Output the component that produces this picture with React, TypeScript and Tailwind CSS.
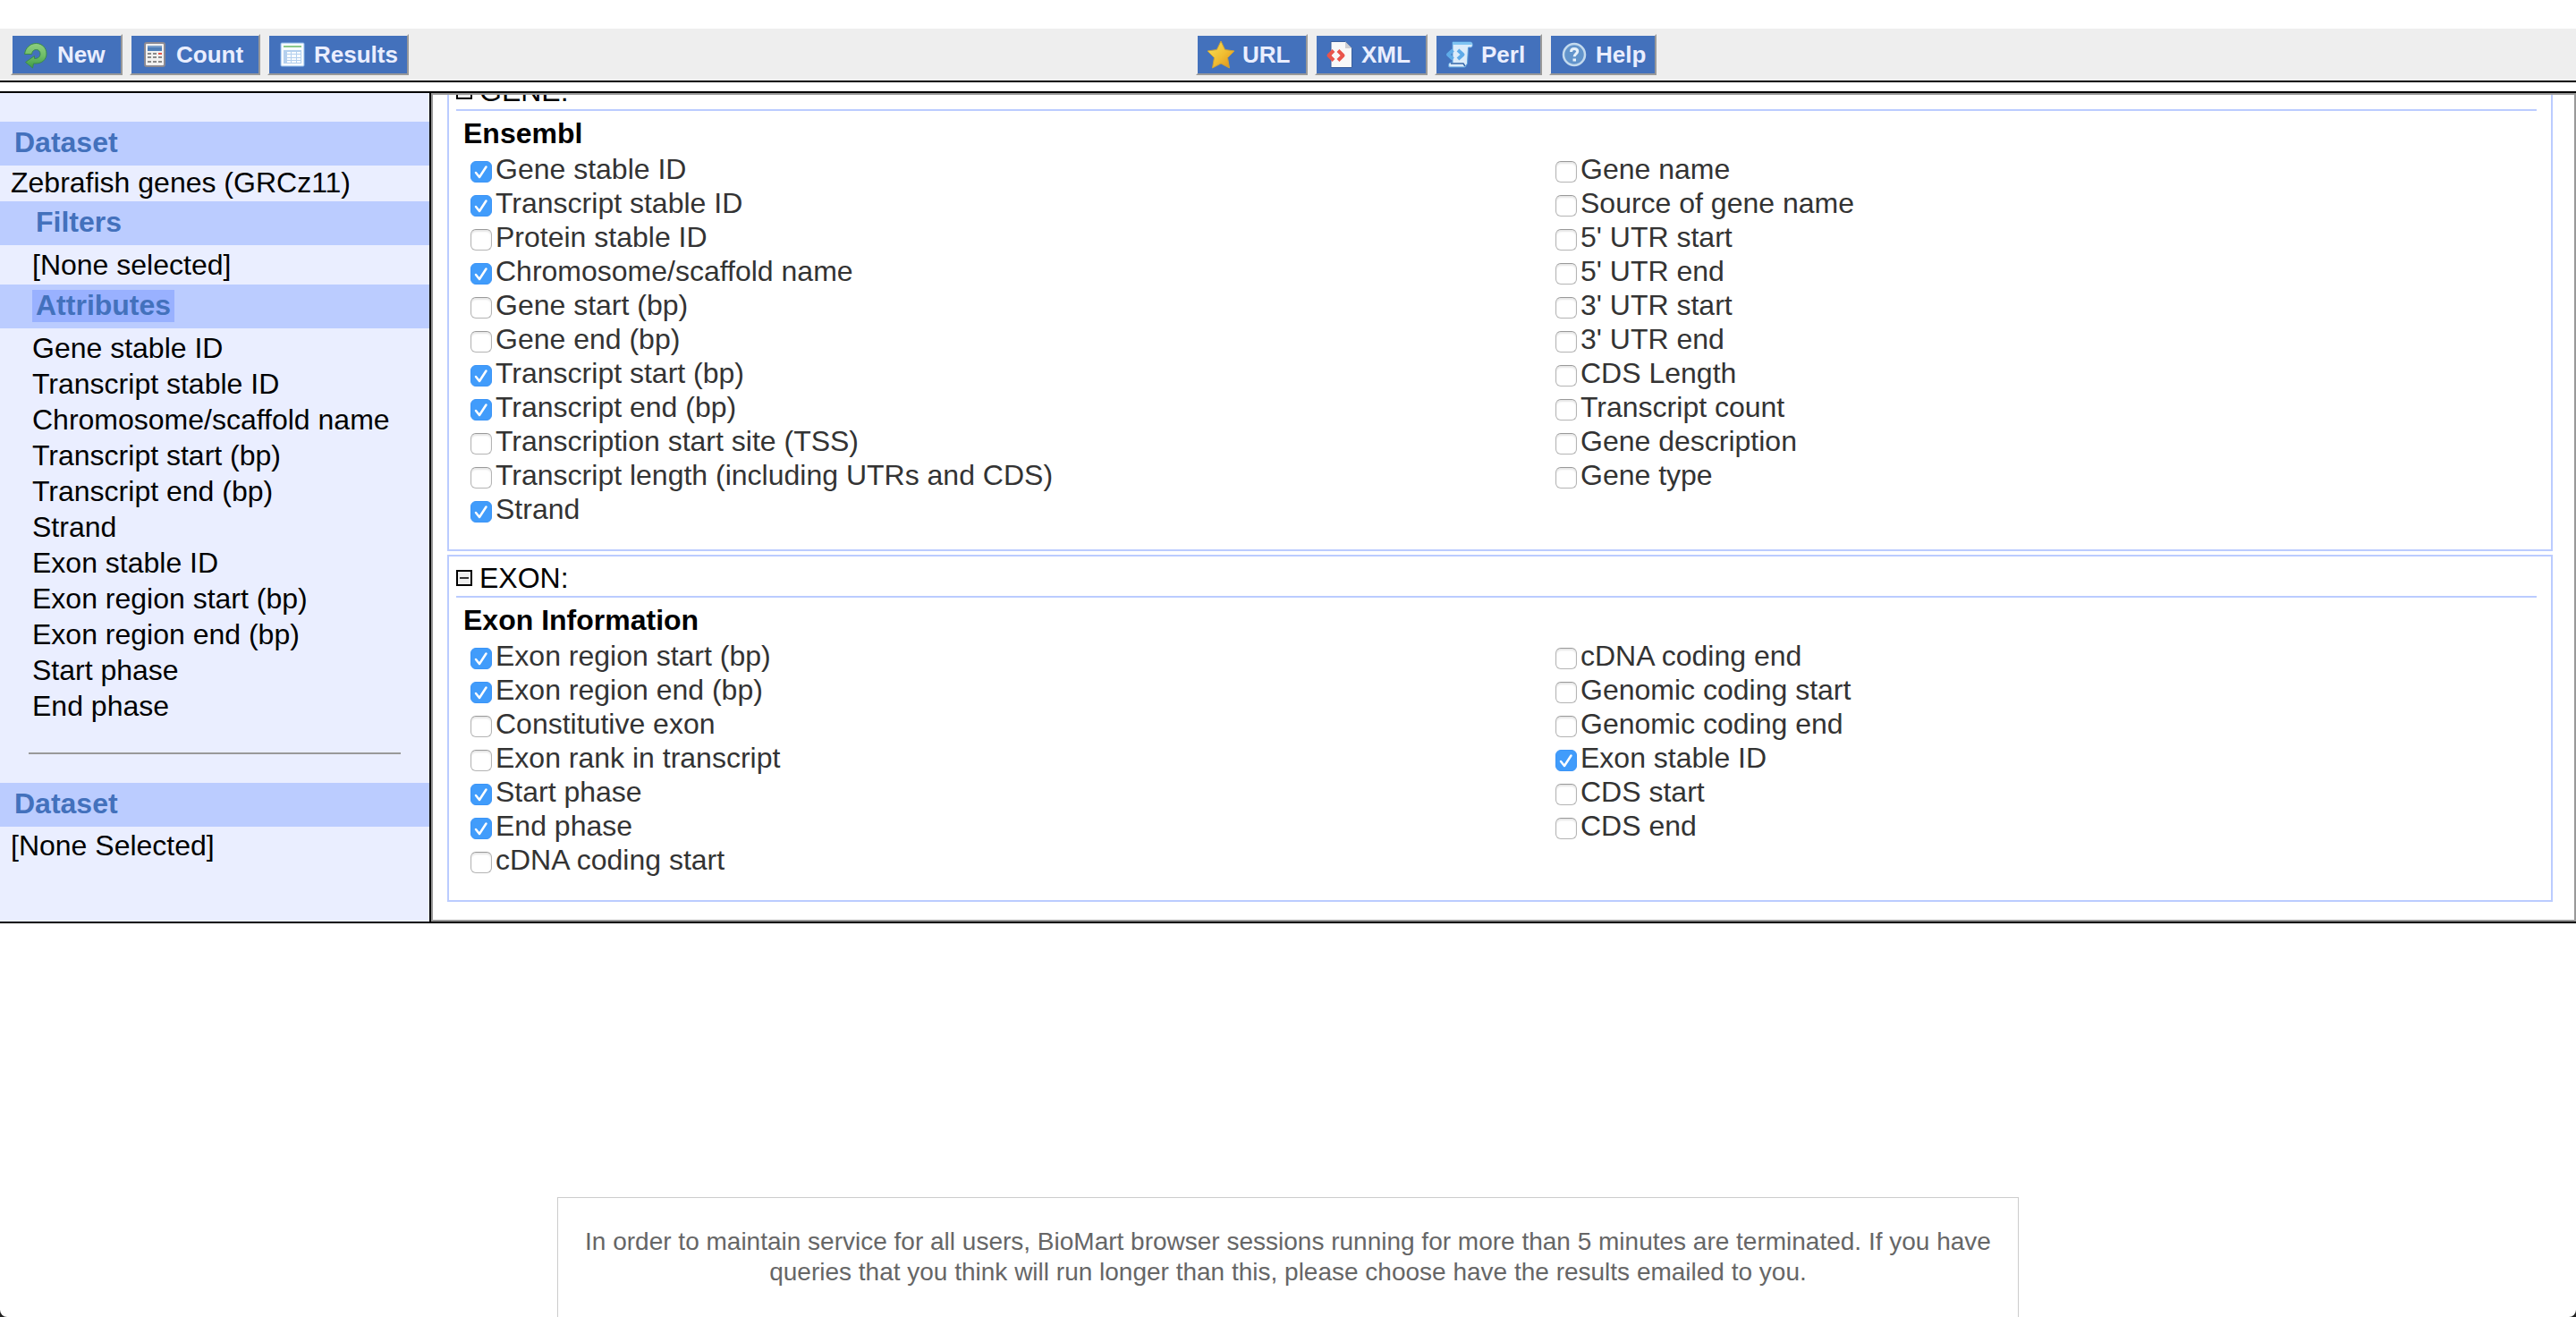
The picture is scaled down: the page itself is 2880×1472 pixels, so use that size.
import React from "react";

type Attribute = { label: string; checked?: boolean };

const NewIcon = () => (
  <svg viewBox="0 0 32 32" className="size-8 shrink-0" aria-hidden="true">
    <defs>
      <linearGradient id="newGreen" x1="0" y1="0" x2="0" y2="1">
        <stop offset="0" stopColor="#8fce80" />
        <stop offset="0.5" stopColor="#6fbd68" />
        <stop offset="1" stopColor="#3f9a45" />
      </linearGradient>
    </defs>
    <path
      d="M3.500 15.500C4.500 8 10 3.500 16.500 3.500C23 3.500 28 8.500 28 15C28 21.500 23 26 16 26L13.500 26L12.500 31L4.500 24.500L14.500 17.500L14.500 20.500C18.500 20.500 21 18.500 21 15.200C21 12.500 19 10.500 16.500 10.500C14 10.500 12 12 11.500 15.500Z"
      fill="url(#newGreen)"
      stroke="#3a8a4c"
      strokeWidth="1"
      strokeLinejoin="round"
    />
  </svg>
);

const CountIcon = () => (
  <svg viewBox="0 0 32 32" className="size-8 shrink-0" aria-hidden="true">
    <rect x="5" y="3" width="22" height="26" rx="2" fill="#f2f1f0" stroke="#8c8a92" strokeWidth="2" />
    <rect x="8" y="6" width="16" height="6" fill="#4f7fb8" />
    <rect x="8" y="6" width="16" height="2" fill="#7ba0cb" />
    <g fill="#8a8a8a">
      <rect x="8" y="14" width="4" height="2" />
      <rect x="14" y="14" width="4" height="2" />
      <rect x="8" y="18" width="4" height="2" />
      <rect x="14" y="18" width="4" height="2" />
      <rect x="20" y="18" width="4" height="2" />
      <rect x="8" y="23" width="4" height="2" />
      <rect x="14" y="23" width="4" height="2" />
      <rect x="20" y="23" width="4" height="2" />
    </g>
    <rect x="20" y="14" width="4" height="2" fill="#e4574c" />
  </svg>
);

const ResultsIcon = () => (
  <svg viewBox="0 0 32 32" className="size-8 shrink-0" aria-hidden="true">
    <rect x="3" y="3" width="26" height="26" rx="1" fill="#f7fbfe" stroke="#8db8e8" strokeWidth="1" />
    <rect x="6" y="6" width="20" height="2" fill="#8cc98a" />
    <g fill="#b4d0ee">
      <rect x="6" y="11" width="4" height="15" />
      <rect x="10" y="11" width="16" height="2" />
      <rect x="10" y="15" width="16" height="1" />
      <rect x="10" y="19" width="16" height="1" />
      <rect x="10" y="22" width="16" height="1" />
      <rect x="10" y="25" width="16" height="1" />
      <rect x="14" y="11" width="1" height="15" />
      <rect x="20" y="11" width="1" height="15" />
      <rect x="25" y="11" width="1" height="15" />
    </g>
  </svg>
);

const StarIcon = () => (
  <svg viewBox="0 0 32 32" className="size-8 shrink-0" aria-hidden="true">
    <defs>
      <linearGradient id="gold" x1="0" y1="0" x2="1" y2="1">
        <stop offset="0" stopColor="#f9e45a" />
        <stop offset="0.550" stopColor="#f0bd31" />
        <stop offset="1" stopColor="#dc8a1c" />
      </linearGradient>
    </defs>
    <path
      d="M16 1L20.600 10.500L31 12L23.500 19.500L25.500 31L16 26L6.500 31L8.500 19.500L1 12L11.400 10.500Z"
      fill="url(#gold)"
      stroke="#c9a13a"
      strokeWidth="1"
      strokeLinejoin="round"
    />
  </svg>
);

const XmlIcon = () => (
  <svg viewBox="0 0 32 32" className="size-8 shrink-0" aria-hidden="true">
    <path d="M6 1.500H22L29.500 9V30.500H6Z" fill="#f8f8f8" stroke="#3a5f9c" strokeWidth="1" />
    <path d="M22 1.500V9H29.500Z" fill="#cfcfd2" />
    <g fill="none" stroke="#e9544b" strokeWidth="4" strokeLinejoin="round">
      <path d="M9 11.500L3.500 17L9 22.500" />
      <path d="M14 11.500L19.500 17L14 22.500" />
    </g>
  </svg>
);

const PerlIcon = () => (
  <svg viewBox="0 0 32 32" className="size-8 shrink-0" aria-hidden="true">
    <path d="M8 2H28C31 2 31 8 28.500 8H25.500L24.500 26L22 30H4C3 27 4 25 6 25H8Z" fill="#dcecfa" stroke="#5ba0dc" strokeWidth="1" />
    <path d="M8 2H28C30 2.500 30 4 29.500 5H8Z" fill="#7fc4f2" />
    <path d="M6 26H20L22 29" fill="none" stroke="#3465a8" strokeWidth="1.500" />
    <g fill="none" stroke="#5fabe8" strokeWidth="4" strokeLinejoin="round">
      <path d="M8.500 11L3 16L8.500 21" />
      <path d="M14 11L19.500 16L14 21" />
    </g>
  </svg>
);

const HelpIcon = () => (
  <svg viewBox="0 0 32 32" className="size-8 shrink-0" aria-hidden="true">
    <circle cx="16" cy="16" r="12" fill="#6294cb" stroke="#c3daee" strokeWidth="2.500" />
    <path d="M12.500 13C12.500 10.500 14 9.500 16 9.500C18.200 9.500 19.700 10.800 19.700 12.600C19.700 15 16.200 15.500 16.200 18.300" fill="none" stroke="#e6f1fa" strokeWidth="3" />
    <rect x="14.500" y="20.500" width="3.500" height="3" fill="#e6f1fa" />
  </svg>
);

function ToolButton({ icon, width, children }: { icon: React.ReactNode; width: string; children: React.ReactNode }) {
  return (
    <button
      type="button"
      className={`flex h-[46px] items-center gap-2 whitespace-nowrap border-2 border-t-[#eeeeee] border-r-[#999999] border-b-[#999999] border-l-[#eeeeee] bg-[#4371bc] pl-2.5 text-[26px] leading-[42px] font-bold text-[#eaeeff] ${width}`}
    >
      {icon}
      {children}
    </button>
  );
}

function SideHeader({ nested, active, children }: { nested?: boolean; active?: boolean; children: React.ReactNode }) {
  return (
    <h2
      className={`flex h-[49px] items-center bg-[#bbccff] pb-px text-[32px] leading-[34px] font-bold text-[#4371bc] ${nested ? "pl-9" : "pl-3"}`}
    >
      <span className={`px-1 pb-0.5 ${active ? "bg-[#99b1ff]" : ""}`}>{children}</span>
    </h2>
  );
}

function CheckRow({ id, attribute }: { id: string; attribute: Attribute }) {
  return (
    <li className="flex h-[38px] items-start">
      <span className="relative mt-2.5 size-6 shrink-0">
        <input
          id={id}
          type="checkbox"
          defaultChecked={attribute.checked}
          className="peer block size-6 appearance-none rounded-[6px] border border-[#b4b4b4] border-t-[#999999] bg-white shadow-[inset_0_2px_2px_rgba(0,0,0,0.1)] checked:border-[#3b94f7] checked:bg-[#419cfb] checked:shadow-none"
        />
        <svg viewBox="0 0 24 24" className="pointer-events-none absolute inset-0 hidden size-6 peer-checked:block" aria-hidden="true">
          <path d="M6 13L10 18L17.500 6.500" fill="none" stroke="white" strokeWidth="2.500" strokeLinecap="round" strokeLinejoin="round" />
        </svg>
      </span>
      <label htmlFor={id} className="pl-1 leading-[38px] whitespace-nowrap text-[#333333]">
        {attribute.label}
      </label>
    </li>
  );
}

function Section({ name, title, columns }: { name: string; title: string; columns: Attribute[][] }) {
  return (
    <section className="border-2 border-[#bbccff] pr-4 pb-[26px] pl-2">
      <div className="flex items-center gap-2 border-b-2 border-[#bbccff] pt-1">
        <button type="button" aria-label={`Collapse ${name}`} className="flex size-[18px] items-center justify-center border-2 border-black bg-[#eeeeee]">
          <span className="h-0.5 w-2.5 bg-[#333333]" />
        </button>
        <span className="leading-10">{name}:</span>
      </div>
      <h3 className="pt-1 pl-2 leading-[42px] font-bold">{title}</h3>
      <div className="grid grid-cols-[1213fr_1097fr] pl-4">
        {columns.map((column, c) => (
          <ul key={c}>
            {column.map((attribute, i) => (
              <CheckRow key={attribute.label} id={`${name}-${c}-${i}`} attribute={attribute} />
            ))}
          </ul>
        ))}
      </div>
    </section>
  );
}

const selectedAttributes = [
  "Gene stable ID",
  "Transcript stable ID",
  "Chromosome/scaffold name",
  "Transcript start (bp)",
  "Transcript end (bp)",
  "Strand",
  "Exon stable ID",
  "Exon region start (bp)",
  "Exon region end (bp)",
  "Start phase",
  "End phase",
];

const geneColumns: Attribute[][] = [
  [
    { label: "Gene stable ID", checked: true },
    { label: "Transcript stable ID", checked: true },
    { label: "Protein stable ID" },
    { label: "Chromosome/scaffold name", checked: true },
    { label: "Gene start (bp)" },
    { label: "Gene end (bp)" },
    { label: "Transcript start (bp)", checked: true },
    { label: "Transcript end (bp)", checked: true },
    { label: "Transcription start site (TSS)" },
    { label: "Transcript length (including UTRs and CDS)" },
    { label: "Strand", checked: true },
  ],
  [
    { label: "Gene name" },
    { label: "Source of gene name" },
    { label: "5' UTR start" },
    { label: "5' UTR end" },
    { label: "3' UTR start" },
    { label: "3' UTR end" },
    { label: "CDS Length" },
    { label: "Transcript count" },
    { label: "Gene description" },
    { label: "Gene type" },
  ],
];

const exonColumns: Attribute[][] = [
  [
    { label: "Exon region start (bp)", checked: true },
    { label: "Exon region end (bp)", checked: true },
    { label: "Constitutive exon" },
    { label: "Exon rank in transcript" },
    { label: "Start phase", checked: true },
    { label: "End phase", checked: true },
    { label: "cDNA coding start" },
  ],
  [
    { label: "cDNA coding end" },
    { label: "Genomic coding start" },
    { label: "Genomic coding end" },
    { label: "Exon stable ID", checked: true },
    { label: "CDS start" },
    { label: "CDS end" },
  ],
];

export default function App() {
  return (
    <div className="relative flex min-h-screen flex-col bg-white pt-8 font-['Liberation_Sans',Arial,sans-serif] text-[32px] text-black">
      <header className="grid grid-cols-[1325fr_1555fr] border-b-2 border-black bg-[#eeeeee] pt-1.5 pb-1.5">
        <div className="flex gap-2 pl-3">
          <ToolButton icon={<NewIcon />} width="w-[125px]">New</ToolButton>
          <ToolButton icon={<CountIcon />} width="w-[146px]">Count</ToolButton>
          <ToolButton icon={<ResultsIcon />} width="w-[158px]">Results</ToolButton>
        </div>
        <div className="flex gap-2 pl-3">
          <ToolButton icon={<StarIcon />} width="w-[125px]">URL</ToolButton>
          <ToolButton icon={<XmlIcon />} width="w-[126px]">XML</ToolButton>
          <ToolButton icon={<PerlIcon />} width="w-[120px]">Perl</ToolButton>
          <ToolButton icon={<HelpIcon />} width="w-[120px]">Help</ToolButton>
        </div>
      </header>

      <div className="mt-2.5 flex border-y-2 border-black">
        <aside className="w-[480px] shrink-0 bg-[#eaeeff] pt-8">
          <SideHeader>Dataset</SideHeader>
          <p className="pb-0.5 pl-3 leading-[38px]">Zebrafish genes (GRCz11)</p>
          <SideHeader nested>Filters</SideHeader>
          <p className="pl-9 leading-[44px]">[None selected]</p>
          <SideHeader nested active>Attributes</SideHeader>
          <ul className="pt-0.5 pl-9 leading-10">
            {selectedAttributes.map((name) => (
              <li key={name}>{name}</li>
            ))}
          </ul>
          <hr className="my-8 mr-8 ml-8 border-t-2 border-[#999999]" />
          <SideHeader>Dataset</SideHeader>
          <p className="pl-3 leading-[42px]">[None Selected]</p>
        </aside>
        <main className="min-w-0 flex-1 border-l-2 border-black">
          <div className="flex flex-col gap-1 overflow-hidden border-2 border-[#999999] pr-6 pb-5 pl-4">
            <div className="-mt-[30px]">
              <Section name="GENE" title="Ensembl" columns={geneColumns} />
            </div>
            <Section name="EXON" title="Exon Information" columns={exonColumns} />
          </div>
        </main>
      </div>

      <footer className="mx-auto mt-[306px] w-full max-w-[1634px] flex-1 border border-b-0 border-[#cccccc] px-6 pt-8 text-center text-[28px] leading-[34px] text-[#666666]">
        In order to maintain service for all users, BioMart browser sessions running for more than 5 minutes are
        terminated. If you have queries that you think will run longer than this, please choose have the results emailed
        to you.
      </footer>

      <svg viewBox="0 0 8 8" className="pointer-events-none absolute bottom-0 left-0 size-2" aria-hidden="true">
        <path d="M0 0A8 8 0 0 0 8 8H0Z" fill="#222222" />
      </svg>
      <svg viewBox="0 0 8 8" className="pointer-events-none absolute right-0 bottom-0 size-2" aria-hidden="true">
        <path d="M8 0A8 8 0 0 1 0 8H8Z" fill="#222222" />
      </svg>
    </div>
  );
}
